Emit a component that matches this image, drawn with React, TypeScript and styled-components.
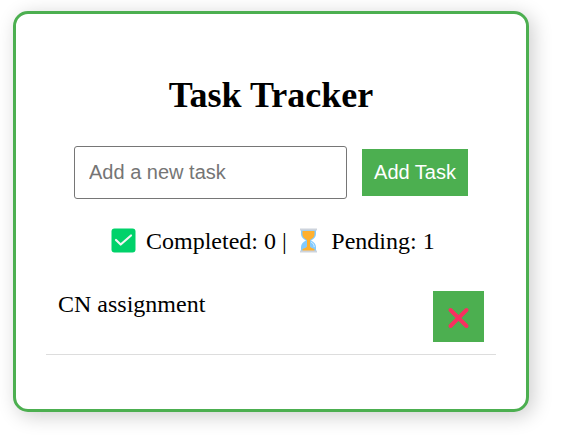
import React, { useState } from "react";
import styled, { createGlobalStyle } from "styled-components";

const GlobalStyle = createGlobalStyle`
  *, *::before, *::after { box-sizing: border-box; }
  body {
    display: flow-root;
    min-height: 100vh;
    margin: 0;
    background: #fff;
    color: #000;
    font-family: "Liberation Serif", "Times New Roman", serif;
    font-size: 24px;
  }
`;

const Card = styled.main`
  width: 516px;
  height: 401px;
  margin: 11px 0 0 13px;
  padding: 60px 30px 0;
  border: 3px solid #4caf50;
  border-radius: 15px;
  background: #fff;
  box-shadow: 4px 4px 20px rgba(0, 0, 0, 0.2);
`;

const Title = styled.h1`
  margin: 0;
  font-size: 36px;
  line-height: 42px;
  text-align: center;
`;

const Form = styled.form`
  display: flex;
  align-items: center;
  gap: 15px;
  margin: 30px 28px 0;
`;

const TaskInput = styled.input`
  width: 273px;
  height: 53px;
  padding: 0 14px;
  border: 1px solid #767676;
  border-radius: 3px;
  background: #fff;
  font: 20px "Liberation Sans", Arial, sans-serif;
  &::placeholder { color: #757575; opacity: 1; }
`;

const Button = styled.button<{ $width: number; $height: number }>`
  display: flex;
  flex: none;
  align-items: center;
  justify-content: center;
  width: ${(p) => p.$width}px;
  height: ${(p) => p.$height}px;
  padding: 0;
  border: 0;
  background: #4caf50;
  color: #fff;
  font: 20px "Liberation Sans", Arial, sans-serif;
  white-space: nowrap;
`;

const Stats = styled.p`
  display: flex;
  align-items: center;
  height: 28px;
  margin: 28px 0 0 65px;
  line-height: 28px;
  white-space: pre;
`;

const CheckIcon = styled.svg`
  width: 25px;
  height: 25px;
  margin: 0 10px 2px 0;
`;

const HourglassIcon = styled.svg`
  width: 19px;
  height: 25px;
  margin: 0 13px 2px 12.5px;
`;

const TaskList = styled.ul`
  margin: 24px 0 0;
  padding: 0;
  list-style: none;
`;

const TaskRow = styled.li`
  display: flex;
  align-items: flex-start;
  justify-content: space-between;
  height: 76px;
  padding: 12px;
  border-bottom: 1px solid #ddd;
  line-height: 26px;
`;

export default function App() {
  const [draft, setDraft] = useState("");
  return (
    <>
      <GlobalStyle />
      <Card>
        <Title>Task Tracker</Title>
        <Form onSubmit={(e) => e.preventDefault()}>
          <TaskInput
            placeholder="Add a new task"
            value={draft}
            onChange={(e) => setDraft(e.target.value)}
          />
          <Button $width={106} $height={47}>Add Task</Button>
        </Form>
        <Stats>
          <CheckIcon viewBox="0 0 25 25" aria-hidden="true">
            <rect x=".5" y=".5" width="24" height="24" rx="3" fill="#00d26a" />
            <path d="M5 12l4.700 4.500L20 7.500" fill="none" stroke="#f4f4f4" strokeWidth="2.2" strokeLinecap="round" strokeLinejoin="round" />
          </CheckIcon>
          <span>Completed: 0 |</span>
          <HourglassIcon viewBox="0 0 19 25" aria-hidden="true">
            <path d="M2 2h15v4c0 3-2 5-5 6.500 3 1.500 5 3.500 5 6.500v4H2v-4c0-3 2-5 5-6.500C4 11 2 9 2 6z" fill="#83cbff" />
            <path d="M3.500 3h12v3.500c0 2.500-2 4-4.500 5.500v6c0 2 3 2 4.500 3.300V23h-12v-1.700C5 20 8 20 8 18v-6C5.500 10.500 3.500 9 3.500 6.500z" fill="#ffb02e" />
            <path d="M12 14c2 1 3.200 3 3.200 5.200" stroke="#d8efff" strokeWidth="1" fill="none" />
            <path d="M1 .5h17v2H1zM1 22.500h17v2H1z" fill="#cdd3dc" />
          </HourglassIcon>
          <span>Pending: 1</span>
        </Stats>
        <TaskList>
          <TaskRow>
            <span>CN assignment</span>
            <Button $width={51} $height={51} aria-label="Delete task">
              <svg width="25" height="25" viewBox="0 0 25 25" aria-hidden="true">
                <path d="M4.500 6l16 16M20.500 6l-16 16" stroke="#f92f60" strokeWidth="4" strokeLinecap="round" />
              </svg>
            </Button>
          </TaskRow>
        </TaskList>
      </Card>
    </>
  );
}
